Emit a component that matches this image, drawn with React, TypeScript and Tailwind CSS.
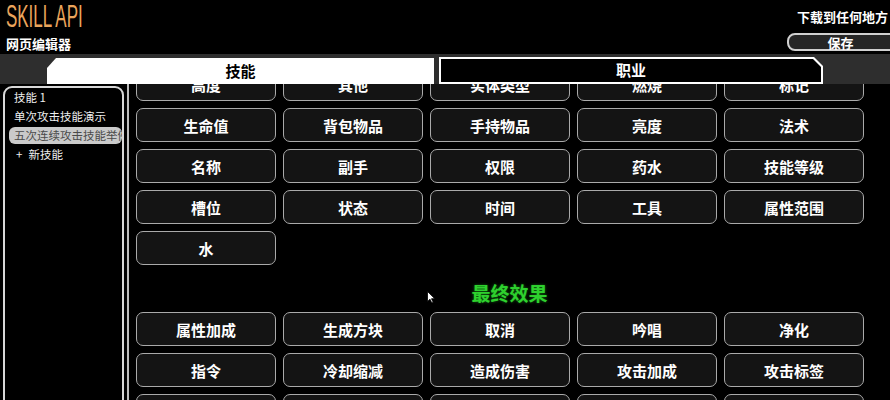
import React from "react";

const grid1: string[][] = [
  ["高度", "其他", "实体类型", "燃烧", "标记"],
  ["生命值", "背包物品", "手持物品", "亮度", "法术"],
  ["名称", "副手", "权限", "药水", "技能等级"],
  ["槽位", "状态", "时间", "工具", "属性范围"],
  ["水"],
];

const grid2: string[][] = [
  ["属性加成", "生成方块", "取消", "吟唱", "净化"],
  ["指令", "冷却缩减", "造成伤害", "攻击加成", "攻击标签"],
  ["延迟", "消息", "粒子", "药水效果", "推动"],
];

function Btn({ label }: { label: string }) {
  return (
    <div className="h-[34px] rounded-[7px] border-[1.5px] border-[#aaaaaa] bg-[#141414] flex items-center justify-center text-white text-[15px] font-bold leading-none">
      {label}
    </div>
  );
}

function Grid({ rows }: { rows: string[][] }) {
  return (
    <div className="grid grid-cols-5 w-[728px] gap-x-[7px] gap-y-[7px]">
      {rows.flat().map((l, i) => (
        <Btn key={i} label={l} />
      ))}
    </div>
  );
}

export default function App() {
  return (
    <div
      className="w-[890px] h-[400px] bg-black overflow-hidden relative"
      style={{ fontFamily: '"Noto Sans CJK SC", "Noto Sans", sans-serif' }}
    >
      {/* Header */}
      <div className="h-[54px] flex justify-between">
        <div className="pl-[6px]">
          <div
            className="text-[32px] leading-[32px] text-[#eba55c] scale-x-[0.53] origin-left whitespace-nowrap"
            style={{ fontFamily: '"Liberation Sans", sans-serif' }}
          >
            SKILL API
          </div>
          <div className="mt-[4px] text-[13px] leading-[16px] font-bold text-white">网页编辑器</div>
        </div>
        <div className="flex flex-col items-end pt-[9px]">
          <div className="text-[13px] leading-[16px] font-bold text-white pr-[2px]">下载到任何地方</div>
          <div className="mt-[8px] mr-[-4px] w-[107px] h-[18px] rounded-l-[8px] border-2 border-[#d0d0d0] bg-[#262626] flex items-center justify-center text-white text-[13px] font-bold leading-none">
            保存
          </div>
        </div>
      </div>

      {/* Tab bar */}
      <div className="h-[30px] bg-[#2e2e2e] flex items-end pl-[47px]">
        <div className="w-[387px] h-[26px] bg-white flex items-center justify-center text-black text-[15px] font-bold [clip-path:polygon(9px_0,100%_0,100%_100%,0_100%,0_10px)]">
          技能
        </div>
        <div className="ml-[5px] w-[384px] h-[27px] bg-white p-[2px] [clip-path:polygon(0_0,calc(100%_-_9px)_0,100%_9px,100%_100%,0_100%)]">
          <div className="w-full h-full bg-black flex items-center justify-center text-white text-[15px] font-bold [clip-path:polygon(0_0,calc(100%_-_8px)_0,100%_8px,100%_100%,0_100%)]">
            职业
          </div>
        </div>
      </div>

      {/* Main */}
      <div className="h-[316px] flex">
        <div className="ml-[3px] mt-[2px] w-[121px] h-[400px] border-2 border-[#d8d8d8] rounded-t-[9px] bg-black overflow-hidden">
          <div className="text-[11.5px] text-[#eeeeee] whitespace-nowrap">
            <div className="h-[19px] leading-[19px] pl-[9px]">技能 1</div>
            <div className="h-[19px] leading-[19px] pl-[9px]">单次攻击技能演示</div>
            <div className="h-[19px] py-[1px] pl-[4px]">
              <div className="h-[17px] leading-[17px] rounded-[6px] bg-[#cacaca] text-[#4a4a4a] pl-[5px] overflow-hidden">
                五次连续攻击技能举例
              </div>
            </div>
            <div className="h-[19px] leading-[19px] pl-[11px] flex gap-[6px]">
              <span>+</span>
              <span>新技能</span>
            </div>
          </div>
        </div>
        <div className="ml-[3px] border-l-2 border-[#bdbdbd] flex-1 overflow-hidden">
          <div className="-mt-[17px] pl-[7px]">
            <Grid rows={grid1} />
            <div className="mt-[16px] -ml-[7px] h-[22px] flex items-center justify-center text-[19px] font-bold text-[#2ed12e] leading-none [text-shadow:0_0_3px_rgba(40,220,40,0.5)]">
              最终效果
            </div>
            <div className="mt-[9px]">
              <Grid rows={grid2} />
            </div>
          </div>
        </div>
      </div>

      {/* Mouse cursor */}
      <svg className="absolute left-[427px] top-[291px]" width="9" height="13" viewBox="0 0 9 13">
        <path d="M0.5 0.5 L0.5 10.5 L3 8.2 L4.8 12 L6.2 11.3 L4.5 7.7 L7.8 7.7 Z" fill="#ffffff" stroke="#000000" strokeWidth="0.8" />
      </svg>
    </div>
  );
}
